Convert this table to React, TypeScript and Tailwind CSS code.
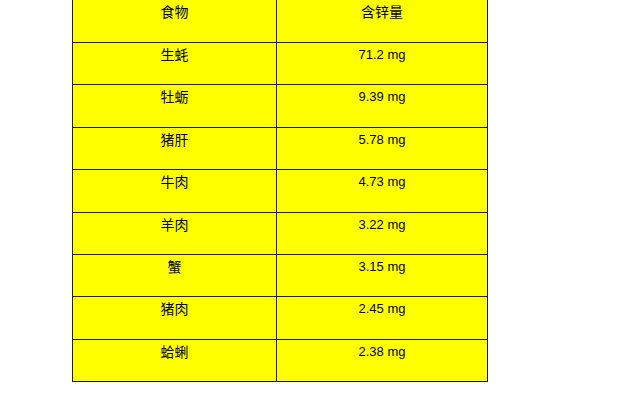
const rows: [string, string][] = [
  ["生蚝", "71.2 mg"],
  ["牡蛎", "9.39 mg"],
  ["猪肝", "5.78 mg"],
  ["牛肉", "4.73 mg"],
  ["羊肉", "3.22 mg"],
  ["蟹", "3.15 mg"],
  ["猪肉", "2.45 mg"],
  ["蛤蜊", "2.38 mg"],
];

const cjk = "text-[14px] [font-family:'Noto_Sans_CJK_SC',sans-serif]";
const num = "text-[13px] [font-family:'Liberation_Sans',Arial,sans-serif]";

export default function App() {
  return (
    <div className="w-[627px] h-[402px] bg-white overflow-hidden">
      <table className="ml-[72px] mt-[-1px] border-collapse bg-[#ffff00] text-black">
        <tbody>
          <tr className="h-[43px]">
            <td className={`w-[204px] border border-[#1a1a1a] align-top text-center pt-[1px] leading-[20px] ${cjk}`}>食物</td>
            <td className={`w-[211px] border border-[#1a1a1a] align-top text-center pt-[1px] leading-[20px] ${cjk}`}>含锌量</td>
          </tr>
          {rows.map(([food, zinc]) => (
            <tr key={food} className="h-[42.4px]">
              <td className={`border border-[#1a1a1a] align-top text-center pt-[1px] leading-[20px] ${cjk}`}>{food}</td>
              <td className={`border border-[#1a1a1a] align-top text-center pt-[2px] leading-[20px] ${num}`}>{zinc}</td>
            </tr>
          ))}
        </tbody>
      </table>
    </div>
  );
}
